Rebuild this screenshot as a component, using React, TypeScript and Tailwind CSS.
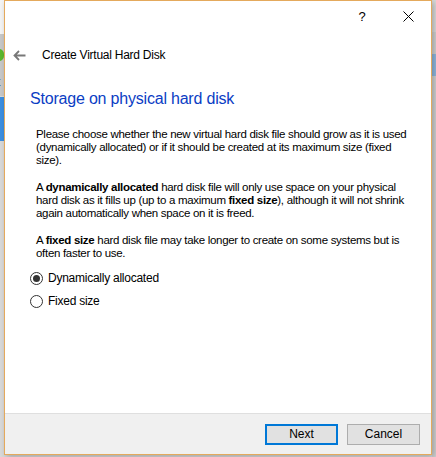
import React from "react";

const font = { fontFamily: '"Segoe UI", "Liberation Sans", Arial, sans-serif' };

function Radio({ checked, label }: { checked?: boolean; label: string }) {
  return (
    <label className="flex h-[23px] items-center gap-[5px]">
      <span className="flex h-[13px] w-[13px] items-center justify-center rounded-full border border-[#333] bg-white">
        {checked && <span className="h-[7px] w-[7px] rounded-full bg-[#333]" />}
      </span>
      <span className="text-[12px] tracking-[-0.25px]">{label}</span>
    </label>
  );
}

export default function App() {
  return (
    <div
      className="relative h-[457px] w-[436px] overflow-hidden bg-[#d9d9d9] text-[11.5px] leading-[13px] tracking-[-0.3px] text-black"
      style={font}
    >
      {/* bits of the window behind */}
      <div className="absolute left-0 top-0 h-[34px] w-[4px] bg-[#f4f4f4]" />
      <div className="absolute left-0 top-[34px] h-[62px] w-[4px] bg-[#c8c8c8]" />
      <div className="absolute left-[-6px] top-[49px] h-[12px] w-[10px] rounded-full bg-[#5cb82c]" />
      <div className="absolute left-[-3px] top-[76px] text-[12px] leading-[13px]">t</div>
      <div className="absolute left-0 top-[97px] h-[44px] w-[4px] bg-[#3d8fe0]" />
      <div className="absolute right-0 top-[32px] h-[425px] w-[4px] bg-[#cfcfcf]" />
      <div className="absolute right-0 top-[54px] h-[22px] w-[4px] bg-[#8fb6dc]" />

      <div className="absolute left-[4px] top-0 flex h-[455px] w-[428px] flex-col border border-[#e4a95c] bg-white shadow-[2px_2px_6px_rgba(0,0,0,0.25)]">
        {/* caption bar */}
        <div className="flex h-[31px] shrink-0 justify-end">
          <div className="flex w-[46px] items-center justify-center text-[13px]">?</div>
          <div className="flex w-[46px] items-center justify-center">
            <svg width="11" height="11" viewBox="0 0 11 11" stroke="#000" strokeWidth="1">
              <path d="M0.5 0.5 L10.5 10.5 M10.5 0.5 L0.5 10.5" />
            </svg>
          </div>
        </div>

        {/* header */}
        <div className="flex h-[48px] shrink-0 items-center pb-[1px]">
          <div className="flex w-[37px] justify-start pl-[8px]">
            <svg width="13" height="11" viewBox="0 0 13 11" fill="none" stroke="#787878" strokeWidth="1.8">
              <path d="M12.5 5.5 H1.5 M6 1 L1.5 5.5 L6 10" />
            </svg>
          </div>
          <div className="text-[12px] tracking-[-0.25px]">Create Virtual Hard Disk</div>
        </div>

        <div className="flex-1 pl-[25px]">
          <h1 className="mt-[9px] text-[16px] leading-[20px] tracking-[-0.2px] text-[#0b3dc4]">
            Storage on physical hard disk
          </h1>

          <div className="mt-[19px] pl-[6px] whitespace-nowrap">
            <p>
              Please choose whether the new virtual hard disk file should grow as it is used
              <br />
              (dynamically allocated) or if it should be created at its maximum size (fixed
              <br />
              size).
            </p>
            <p className="mt-[14px]">
              A <b>dynamically allocated</b> hard disk file will only use space on your physical
              <br />
              hard disk as it fills up (up to a maximum <b>fixed size</b>), although it will not shrink
              <br />
              again automatically when space on it is freed.
            </p>
            <p className="mt-[14px]">
              A <b>fixed size</b> hard disk file may take longer to create on some systems but is
              <br />
              often faster to use.
            </p>
          </div>

          <div className="mt-[7px] flex flex-col">
            <Radio checked label="Dynamically allocated" />
            <Radio label="Fixed size" />
          </div>
        </div>

        {/* footer */}
        <div className="flex h-[41px] shrink-0 items-center justify-end gap-[9px] border-t border-[#dfdfdf] bg-[#f0f0f0] pr-[11px]">
          <button className="h-[21px] w-[73px] border-2 border-[#0078d7] bg-[#e1e1e1] text-[12px] tracking-normal">
            Next
          </button>
          <button className="h-[21px] w-[73px] border border-[#adadad] bg-[#e1e1e1] text-[12px] tracking-normal">
            Cancel
          </button>
        </div>
      </div>
    </div>
  );
}
